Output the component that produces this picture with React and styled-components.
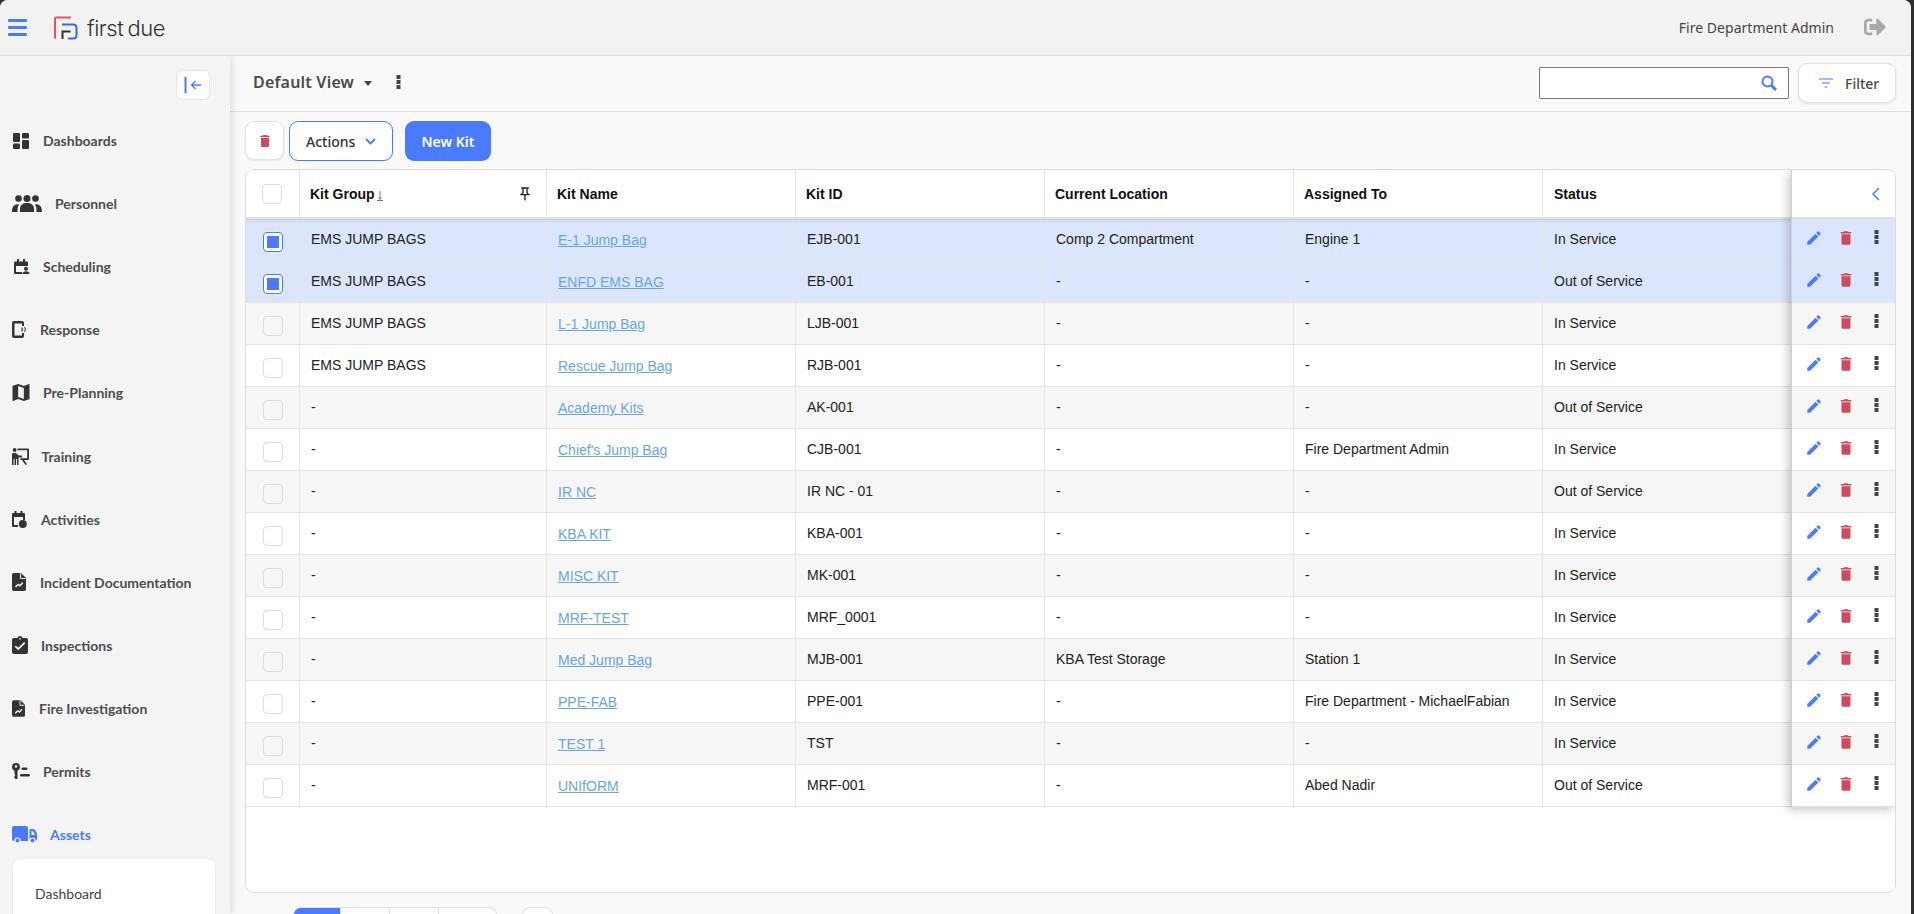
import React from "react";
import styled, { createGlobalStyle } from "styled-components";
import { FaSignOutAlt } from "react-icons/fa";
import { MdEdit, MdDelete, MdOutlinePushPin } from "react-icons/md";

const BLUE = "#4a7aff";
const LINE = "#e0e3e8";

const Global = createGlobalStyle`
  html, body { margin: 0; height: 100%; overflow: hidden; background: #2f2f2f; }
  * { box-sizing: border-box; }
  #root { height: 100%; }
`;

const Shell = styled.div`
  height: 914px;
  margin-right: 3px;
  border-radius: 8px 8px 0 0;
  overflow: hidden;
  background: #f9f9f9;
  display: flex;
  flex-direction: column;
`;

const TopBar = styled.header`
  height: 56px;
  flex: none;
  display: flex;
  align-items: center;
  background: #f2f2f2;
  border-bottom: 1px solid #dcdcdc;
  padding: 0 25px 1px 8px;
  position: relative;
  z-index: 3;
`;

const Burger = styled.button`
  width: 19px;
  height: 17px;
  padding: 0;
  border: 0;
  background: none;
  display: flex;
  flex-direction: column;
  justify-content: space-between;
  span { display: block; height: 3px; border-radius: 1px; background: ${BLUE}; }
`;

const Logo = styled.svg`
  width: 24px;
  height: 24px;
  margin-left: 27px;
  margin-top: 1px;
`;

const Brand = styled.div`
  margin-left: 9px;
  font-family: "Inter", "Liberation Sans", sans-serif;
  font-size: 22px;
  font-weight: 300;
  letter-spacing: -0.45px;
  word-spacing: -1.5px;
  color: #333;
  line-height: 1;
  margin-top: 1px;
`;

const UserName = styled.div`
  margin-left: auto;
  font-family: "Noto Sans", sans-serif;
  font-size: 14px;
  letter-spacing: 0.03px;
  color: #444;
`;

const Exit = styled(FaSignOutAlt)`
  width: 22px;
  height: 22px;
  margin-left: 30px;
  color: #a8a8a8;
`;

const Body = styled.div`
  flex: 1;
  display: flex;
  min-height: 0;
`;

const Sidebar = styled.aside`
  width: 230px;
  flex: none;
  background: #f4f4f4;
  box-shadow: 2px 0 8px rgba(0, 0, 0, 0.12);
  position: relative;
  z-index: 2;
  overflow: hidden;
`;

const CollapseRow = styled.div`
  display: flex;
  justify-content: flex-end;
  padding: 14px 20px 9px 0;
`;

const CollapseBtn = styled.button`
  width: 34px;
  height: 30px;
  padding: 0;
  background: #fff;
  border: 1px solid #e4e4e4;
  border-radius: 6px;
  display: flex;
  align-items: center;
  justify-content: center;
`;

const NavItem = styled.div`
  height: 63.1px;
  display: flex;
  align-items: center;
  padding-left: 12px;
  font-family: "Lato", sans-serif;
  font-size: 14px;
  font-weight: 700;
  color: ${(p) => (p.$active ? BLUE : "#4d4d4d")};
`;

const NavIcon = styled.svg`
  flex: none;
  fill: ${(p) => (p.$active ? BLUE : "#333")};
`;

const NavLabel = styled.span`
  margin-left: ${(p) => p.$gap}px;
`;

const SubCard = styled.div`
  margin: -8px 0 0 12px;
  width: 204px;
  height: 120px;
  background: #fff;
  border: 1px solid #ececec;
  border-radius: 8px;
  padding: 26px 0 0 22px;
  font-family: "Lato", sans-serif;
  font-size: 14px;
  color: #444;
  line-height: 17px;
`;

const Main = styled.main`
  flex: 1;
  min-width: 0;
  display: flex;
  flex-direction: column;
`;

const ViewBar = styled.div`
  height: 56px;
  flex: none;
  border-bottom: 1px solid #dedede;
  display: flex;
  align-items: center;
  padding: 0 15px 3px 23px;
`;

const ViewTitle = styled.div`
  font-family: "Noto Sans", sans-serif;
  font-size: 16px;
  font-weight: 600;
  letter-spacing: 0.2px;
  color: #4a4a4a;
`;

const Caret = styled.span`
  width: 0;
  height: 0;
  margin: 3px 0 0 10px;
  border-left: 4.5px solid transparent;
  border-right: 4.5px solid transparent;
  border-top: 5px solid #444;
`;

const Dots = styled.svg`
  width: 5px;
  height: 14px;
  flex: none;
  fill: #444;
  margin-left: ${(p) => p.$left || 0}px;
  margin-top: ${(p) => p.$top || 0}px;
`;

const SearchBox = styled.div`
  margin-left: auto;
  width: 250px;
  height: 32px;
  margin-top: 1px;
  background: #fff;
  border: 1px solid #777;
  border-radius: 2px;
  display: flex;
  align-items: center;
  justify-content: flex-end;
  padding-right: 11px;
`;

const FilterBtn = styled.button`
  width: 98px;
  height: 40px;
  margin: 2px 0 0 9px;
  background: #fff;
  border: 1px solid #e2e2e2;
  border-radius: 9px;
  box-shadow: 0 1px 3px rgba(0, 0, 0, 0.08);
  display: flex;
  align-items: center;
  padding: 0 0 0 20px;
  font-family: "Noto Sans", sans-serif;
  font-size: 14px;
  font-weight: 500;
  color: #4a4a4a;
  span { margin-left: 12px; }
`;

const ActionBar = styled.div`
  height: 57px;
  flex: none;
  display: flex;
  align-items: flex-start;
  padding: 9px 0 0 15px;
  font-family: "Noto Sans", sans-serif;
  font-size: 14px;
`;

const IconBtn = styled.button`
  width: 39px;
  height: 39px;
  padding: 0;
  background: #fff;
  border: 1px solid #e2e2e2;
  border-radius: 9px;
  box-shadow: 0 1px 2px rgba(0, 0, 0, 0.08);
  display: flex;
  align-items: center;
  justify-content: center;
  color: #cc4b5e;
`;

const ActionsBtn = styled.button`
  width: 104px;
  height: 40px;
  margin-left: 5px;
  padding: 0 0 0 16px;
  background: #fff;
  border: 1px solid ${BLUE};
  border-radius: 9px;
  display: flex;
  align-items: center;
  font: inherit;
  font-weight: 500;
  color: #333;
  svg { margin-left: 10px; }
`;

const PrimaryBtn = styled.button`
  width: 86px;
  height: 40px;
  margin-left: 12px;
  padding: 0;
  background: ${BLUE};
  border: 0;
  border-radius: 9px;
  font: inherit;
  font-weight: 600;
  color: #fff;
`;

const TableCard = styled.section`
  margin: 0 15px 0 15px;
  width: 1651px;
  height: 724px;
  flex: none;
  background: #fff;
  border: 1px solid #dcdcdc;
  border-radius: 9px;
  display: flex;
  align-items: flex-start;
  overflow: hidden;
  font-family: "Liberation Sans", sans-serif;
  font-size: 14px;
  color: #222;
`;

const Columns = styled.div`
  flex: 1;
  min-width: 0;
`;

const COLS = "54px 247px 249px 249px 249px 249px 248px";

const HeadRow = styled.div`
  display: grid;
  grid-template-columns: ${COLS};
  height: 49px;
  border-bottom: 2px solid #e0e0e0;
  font-weight: 700;
  color: #111;
  position: relative;
  z-index: 1;
  box-shadow: 0 1px 4px rgba(0, 0, 0, 0.12);
  background: #fff;
`;

const HeadCell = styled.div`
  display: flex;
  align-items: center;
  padding: 0 10px 0 ${(p) => (p.$last ? 11 : 10)}px;
  border-right: ${(p) => (p.$last ? "0" : "1px solid #e4e4e4")};
  justify-content: ${(p) => (p.$center ? "center" : "flex-start")};
`;

const Row = styled.div`
  display: grid;
  grid-template-columns: ${COLS};
  height: 42px;
  border-bottom: 1px solid ${LINE};
  background: ${(p) => (p.$selected ? "#dbe5fc" : p.$odd ? "#f6f6f6" : "#fff")};
`;

const Cell = styled.div`
  display: flex;
  align-items: center;
  padding: 0 10px 1px 11px;
  white-space: nowrap;
  border-right: ${(p) => (p.$last ? "0" : "1px solid #e4e4e4")};
  justify-content: ${(p) => (p.$center ? "center" : "flex-start")};
`;

const KitLink = styled.a`
  color: #68a8de;
  text-decoration: underline;
  margin-top: 2px;
`;

const Check = styled.span`
  width: 20px;
  height: 20px;
  flex: none;
  margin-top: ${(p) => (p.$head ? 0 : 5)}px;
  margin-right: ${(p) => (p.$head ? 2 : 0)}px;
  border: 1px solid ${(p) => (p.$on ? BLUE : "#ddd")};
  border-radius: 4px;
  background: ${(p) => (p.$plain ? "transparent" : "#fff")};
  display: flex;
  align-items: center;
  justify-content: center;
  &::after {
    content: "";
    width: 12px;
    height: 12px;
    background: ${(p) => (p.$on ? BLUE : "transparent")};
  }
`;

const SortMark = styled.svg`
  width: 6px;
  height: 10px;
  margin: 4px 0 0 2px;
`;

const Pin = styled(MdOutlinePushPin)`
  width: 16px;
  height: 16px;
  margin-left: auto;
  margin-right: 3px;
  color: #222;
`;

const ActionPanel = styled.div`
  width: 104px;
  flex: none;
  position: relative;
  z-index: 2;
  border-left: 1px solid #cfcfcf;
  box-shadow: -3px 3px 9px rgba(0, 0, 0, 0.22);
`;

const PanelHead = styled.div`
  height: 49px;
  border-bottom: 2px solid #e0e0e0;
  display: flex;
  align-items: center;
  justify-content: flex-end;
  padding-right: 15px;
  background: #fff;
`;

const PanelRow = styled.div`
  height: 42px;
  border-bottom: 1px solid ${LINE};
  background: ${(p) => (p.$selected ? "#dbe5fc" : p.$odd ? "#f6f6f6" : "#fff")};
  display: flex;
  align-items: flex-start;
  padding: 10px 0 0 13px;
`;

const Edit = styled(MdEdit)`
  width: 18px;
  height: 18px;
  color: ${BLUE};
`;

const Trash = styled(MdDelete)`
  width: 18px;
  height: 18px;
  margin-left: 14px;
  color: #cc4b5e;
`;

const Pager = styled.nav`
  display: flex;
  align-items: flex-start;
  padding: 14px 0 0 63px;
`;

const PageBtn = styled.div`
  width: ${(p) => p.$w}px;
  height: 30px;
  background: ${(p) => (p.$on ? BLUE : "#fff")};
  border: 1px solid #dedede;
  border-left: ${(p) => (p.$first ? "1px solid #dedede" : "0")};
  border-radius: ${(p) => (p.$first ? "8px 0 0 0" : p.$end ? "0 8px 0 0" : "0")};
`;

const PageSize = styled.div`
  width: 31px;
  height: 30px;
  margin-left: 25px;
  background: #fff;
  border: 1px solid #dedede;
  border-radius: 8px 8px 0 0;
`;

const nav = [
  {
    label: "Dashboards", w: 16, h: 16, gap: 14, x: 1,
    icon: (
      <>
        <rect x="0" y="0" width="7" height="9" rx="1" />
        <rect x="0" y="10.5" width="7" height="5.5" rx="1" />
        <rect x="9" y="0" width="7" height="5.5" rx="1" />
        <rect x="9" y="7" width="7" height="9" rx="1" />
      </>
    ),
  },
  {
    label: "Personnel", w: 30, h: 17, gap: 13,
    icon: (
      <>
        <circle cx="6.5" cy="3.5" r="3.3" />
        <circle cx="15" cy="3.5" r="3.5" />
        <circle cx="23.5" cy="3.5" r="3.3" />
        <path d="M8 17v-3.5C8 10 11 8 15 8s7 2 7 5.5V17z" />
        <path d="M0 17c0-4 1-7 4.500-7.600 1-.2 2 0 2.600.3C5.500 11 5.500 14 5.500 17z" />
        <path d="M30 17c0-4-1-7-4.500-7.600-1-.2-2 0-2.600.3 1.600 1.300 1.600 4.300 1.600 7.300z" />
      </>
    ),
  },
  {
    label: "Scheduling", w: 16, h: 15, gap: 13, x: 2,
    icon: (
      <>
        <path d="M1 2.500h12a1 1 0 0 1 1 1V7H2v6h6v2H1a1 1 0 0 1-1-1V3.500a1 1 0 0 1 1-1z" />
        <rect x="3" y="0" width="2" height="3" />
        <rect x="9" y="0" width="2" height="3" />
        <circle cx="12" cy="9.800" r="2" />
        <path d="M8.500 15c0-2 1.500-2.800 3.500-2.800s3.500.8 3.500 2.800z" />
      </>
    ),
  },
  {
    label: "Response", w: 15, h: 17, gap: 13,
    icon: (
      <>
        <path d="M2 0h8a2 2 0 0 1 2 2v3h-2V2.500H2.500v12H10V12h2v3a2 2 0 0 1-2 2H2a2 2 0 0 1-2-2V2a2 2 0 0 1 2-2z" />
        <rect x="9.500" y="6.500" width="1.300" height="3.800" />
        <path d="M12.500 6a3 3 0 0 1 0 5l-.6-.8a2 2 0 0 0 0-3.400z" />
      </>
    ),
  },
  {
    label: "Pre-Planning", w: 18, h: 17, gap: 13, vb: "3 3 18 18",
    icon: <path d="M20.500 3l-.16.03L15 5.100 9 3 3.360 4.900c-.21.07-.36.25-.36.48V20.500c0 .28.22.5.5.5l.16-.03L9 18.900l6 2.100 5.640-1.900c.21-.07.36-.25.36-.48V3.500c0-.28-.22-.5-.5-.5zM15 19l-6-2.110V5l6 2.110V19z" />,
  },
  {
    label: "Training", w: 17, h: 17, gap: 12.500,
    icon: (
      <>
        <circle cx="2.600" cy="2" r="1.900" />
        <path d="M0 6.500C0 5.500.6 5 1.500 5h2.300L7 7.500h3v2H6.500V17H5v-6H4v6H2.500v-6h-1v6H0z" />
        <path d="M5.500 0.500H16a1 1 0 0 1 1 1V11a1 1 0 0 1-1 1H12l3 4.200-1.500 .8L10 12H8.500v-1.800H15.200V2.300H5.500z" />
      </>
    ),
  },
  {
    label: "Activities", w: 15, h: 17, gap: 14,
    icon: (
      <>
        <path d="M1 2h11a1 1 0 0 1 1 1v6h-2V6H2v8h4v2H1a1 1 0 0 1-1-1V3a1 1 0 0 1 1-1z" />
        <rect x="2.500" y="0" width="2" height="3" />
        <rect x="8.500" y="0" width="2" height="3" />
        <circle cx="10.800" cy="13" r="4" />
      </>
    ),
  },
  { label: "Incident Documentation", w: 14, h: 18, gap: 14, doc: true },
  {
    label: "Inspections", w: 16, h: 18, gap: 13, vb: "3 1 18 20",
    icon: <path d="M19 3h-4.180C14.400 1.840 13.300 1 12 1c-1.300 0-2.400.84-2.820 2H5c-1.100 0-2 .9-2 2v14c0 1.100.9 2 2 2h14c1.100 0 2-.9 2-2V5c0-1.100-.9-2-2-2zm-7 0c.55 0 1 .45 1 1s-.45 1-1 1-1-.45-1-1 .45-1 1-1zm-2 14l-4-4 1.410-1.410L10 14.170l6.590-6.590L18 9l-8 8z" />,
  },
  { label: "Fire Investigation", w: 13, h: 17, gap: 14, doc: true },
  {
    label: "Permits", w: 18, h: 16, gap: 13,
    icon: (
      <>
        <path fillRule="evenodd" d="M4 0a4 4 0 0 1 1.500 7.700V16H3.500L2.500 15v-2l1-1-1-1V7.700A4 4 0 0 1 4 0zm0 2.200a1.300 1.300 0 1 0 0 2.600 1.300 1.300 0 0 0 0-2.600z" />
        <rect x="9.500" y="4.500" width="6" height="2.600" rx="1.300" />
        <rect x="8" y="11" width="10" height="2.600" rx="1.300" />
      </>
    ),
  },
  {
    label: "Assets", w: 25, h: 17, gap: 13, active: true,
    icon: (
      <>
        <path d="M2 0h12a2 2 0 0 1 2 2v13H2a2 2 0 0 1-2-2V2a2 2 0 0 1 2-2z" />
        <path fillRule="evenodd" d="M17.500 3H21c2 0 4 3 4 6v4a2 2 0 0 1-2 2h-5.500zm2 2v4h3.200c-.2-1.500-1.200-4-2.700-4z" />
        <circle cx="5.500" cy="14.500" r="2.500" stroke="#f4f4f4" strokeWidth="1.200" />
        <circle cx="20.500" cy="14.500" r="2.500" stroke="#f4f4f4" strokeWidth="1.200" />
      </>
    ),
  },
];

const DocIcon = () => (
  <>
    <path d="M2 0h7l5 5v11a2 2 0 0 1-2 2H2a2 2 0 0 1-2-2V2a2 2 0 0 1 2-2z" />
    <path d="M8.600 .5v5h4.800" fill="none" stroke="#f4f4f4" strokeWidth="1" />
    <path d="M3.500 14l2.800-2.500 1.700 1.300 2.700-3" fill="none" stroke="#f4f4f4" strokeWidth="1.500" />
  </>
);

const rows = [
  ["EMS JUMP BAGS", "E-1 Jump Bag", "EJB-001", "Comp 2 Compartment", "Engine 1", "In Service"],
  ["EMS JUMP BAGS", "ENFD EMS BAG", "EB-001", "-", "-", "Out of Service"],
  ["EMS JUMP BAGS", "L-1 Jump Bag", "LJB-001", "-", "-", "In Service"],
  ["EMS JUMP BAGS", "Rescue Jump Bag", "RJB-001", "-", "-", "In Service"],
  ["-", "Academy Kits", "AK-001", "-", "-", "Out of Service"],
  ["-", "Chief's Jump Bag", "CJB-001", "-", "Fire Department Admin", "In Service"],
  ["-", "IR NC", "IR NC - 01", "-", "-", "Out of Service"],
  ["-", "KBA KIT", "KBA-001", "-", "-", "In Service"],
  ["-", "MISC KIT", "MK-001", "-", "-", "In Service"],
  ["-", "MRF-TEST", "MRF_0001", "-", "-", "In Service"],
  ["-", "Med Jump Bag", "MJB-001", "KBA Test Storage", "Station 1", "In Service"],
  ["-", "PPE-FAB", "PPE-001", "-", "Fire Department - MichaelFabian", "In Service"],
  ["-", "TEST 1", "TST", "-", "-", "In Service"],
  ["-", "UNIfORM", "MRF-001", "-", "Abed Nadir", "Out of Service"],
];

const DotsGlyph = (props) => (
  <Dots viewBox="0 0 5 14" {...props}>
    <rect x="0.500" y="0" width="4" height="4" />
    <rect x="0.500" y="5" width="4" height="4" />
    <rect x="0.500" y="10" width="4" height="4" />
  </Dots>
);

export default function App() {
  return (
    <>
      <Global />
      <Shell>
        <TopBar>
          <Burger aria-label="Menu">
            <span />
            <span />
            <span />
          </Burger>
          <Logo viewBox="0 0 24 24" fill="none">
            <path d="M1 22.500V2.500a1 1 0 0 1 1-1h15" stroke="#f4515f" strokeWidth="2" />
            <path d="M8 8.500h11c2 0 3.500 1.500 3.500 3.500v7c0 2-1.500 3.500-3.500 3.500h-5" stroke="#2f6bf0" strokeWidth="2" />
            <path d="M8.500 23v-7.500h8" stroke="#333" strokeWidth="2" />
          </Logo>
          <Brand>first due</Brand>
          <UserName>Fire Department Admin</UserName>
          <Exit />
        </TopBar>
        <Body>
          <Sidebar>
            <CollapseRow>
              <CollapseBtn aria-label="Collapse">
                <svg width="18" height="16" viewBox="0 0 18 16" fill="none" stroke={BLUE}>
                  <path d="M1.500 0v16" strokeWidth="2" />
                  <path d="M17 8H7.500M11.500 4l-4 4 4 4" strokeWidth="1.300" />
                </svg>
              </CollapseBtn>
            </CollapseRow>
            {nav.map((n) => (
              <NavItem key={n.label} $active={n.active}>
                <NavIcon
                  $active={n.active}
                  width={n.w}
                  height={n.h}
                  viewBox={n.vb || `0 0 ${n.doc ? 14 : n.w} ${n.doc ? 18 : n.h}`}
                  style={n.x ? { marginLeft: n.x } : undefined}
                >
                  {n.doc ? <DocIcon /> : n.icon}
                </NavIcon>
                <NavLabel $gap={n.gap}>{n.label}</NavLabel>
              </NavItem>
            ))}
            <SubCard>Dashboard</SubCard>
          </Sidebar>
          <Main>
            <ViewBar>
              <ViewTitle>Default View</ViewTitle>
              <Caret />
              <DotsGlyph $left={24} />
              <SearchBox>
                <svg width="16" height="16" viewBox="0 0 16 16" fill="none" stroke={BLUE}>
                  <circle cx="6.500" cy="6.500" r="5" strokeWidth="2" />
                  <path d="M10.500 10.500L15 15" strokeWidth="3" />
                </svg>
              </SearchBox>
              <FilterBtn>
                <svg width="14" height="10" viewBox="0 0 14 10" stroke={BLUE} fill="none">
                  <path d="M0 1h14M3 5h8M5.500 9h3" strokeWidth="1.200" />
                </svg>
                <span>Filter</span>
              </FilterBtn>
            </ViewBar>
            <ActionBar>
              <IconBtn aria-label="Delete">
                <MdDelete size={16} />
              </IconBtn>
              <ActionsBtn>
                Actions
                <svg width="11" height="7" viewBox="0 0 11 7" fill="none" stroke={BLUE} strokeWidth="1.800">
                  <path d="M1 1l4.500 4.500L10 1" />
                </svg>
              </ActionsBtn>
              <PrimaryBtn>New Kit</PrimaryBtn>
            </ActionBar>
            <TableCard>
              <Columns>
                <HeadRow>
                  <HeadCell $center>
                    <Check $head />
                  </HeadCell>
                  <HeadCell>
                    Kit Group
                    <SortMark viewBox="0 0 6 10" fill="none" stroke="#666">
                      <path d="M3 0v8M1.500 6.500L3 8.500l1.500-2M0 9.500h6" strokeWidth="0.900" />
                    </SortMark>
                    <Pin />
                  </HeadCell>
                  <HeadCell>Kit Name</HeadCell>
                  <HeadCell>Kit ID</HeadCell>
                  <HeadCell>Current Location</HeadCell>
                  <HeadCell>Assigned To</HeadCell>
                  <HeadCell $last>Status</HeadCell>
                </HeadRow>
                {rows.map((r, i) => {
                  const selected = i < 2;
                  const odd = i % 2 === 0;
                  return (
                    <Row key={r[1]} $selected={selected} $odd={odd}>
                      <Cell $center>
                        <Check $on={selected} $plain={odd && !selected} />
                      </Cell>
                      <Cell>{r[0]}</Cell>
                      <Cell>
                        <KitLink>{r[1]}</KitLink>
                      </Cell>
                      <Cell>{r[2]}</Cell>
                      <Cell>{r[3]}</Cell>
                      <Cell>{r[4]}</Cell>
                      <Cell $last>{r[5]}</Cell>
                    </Row>
                  );
                })}
              </Columns>
              <ActionPanel>
                <PanelHead>
                  <svg width="8" height="14" viewBox="0 0 8 14" fill="none" stroke={BLUE} strokeWidth="1.500">
                    <path d="M7 1L1 7l6 6" />
                  </svg>
                </PanelHead>
                {rows.map((r, i) => (
                  <PanelRow key={r[1]} $selected={i < 2} $odd={i % 2 === 0}>
                    <Edit />
                    <Trash />
                    <DotsGlyph $left={19} $top={1} />
                  </PanelRow>
                ))}
              </ActionPanel>
            </TableCard>
            <Pager>
              <PageBtn $w={48} $on $first />
              <PageBtn $w={49} />
              <PageBtn $w={49} />
              <PageBtn $w={58} $end />
              <PageSize />
            </Pager>
          </Main>
        </Body>
      </Shell>
    </>
  );
}
